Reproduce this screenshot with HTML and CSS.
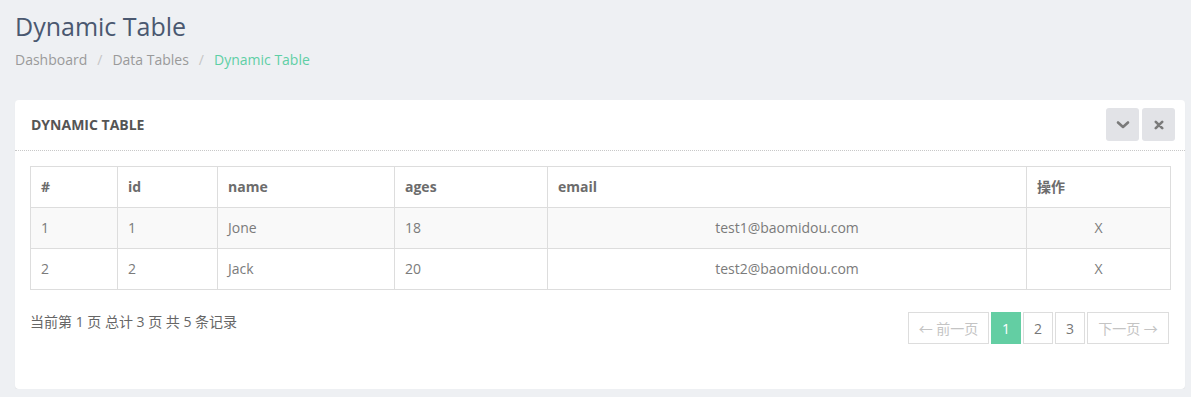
FILE: index.html
```html
<!DOCTYPE html>
<html>
<head>
<meta charset="utf-8">
<link rel="stylesheet" href="styles.css">
</head>
<body>
<div class="page">
  <h1 class="page-title">Dynamic Table</h1>
  <ol class="breadcrumb">
    <li class="crumb">Dashboard</li>
    <li class="sep">/</li>
    <li class="crumb">Data Tables</li>
    <li class="sep">/</li>
    <li class="crumb active">Dynamic Table</li>
  </ol>
  <section class="panel">
    <header class="panel-head">
      <h2 class="panel-title">DYNAMIC TABLE</h2>
      <div class="tools">
        <button class="tool" aria-label="collapse">
          <svg width="14" height="10" viewBox="0 0 14 10"><path d="M2 2.5 L7 7 L12 2.5" fill="none" stroke="#7a7a7a" stroke-width="2.6" stroke-linecap="round" stroke-linejoin="round"/></svg>
        </button>
        <button class="tool" aria-label="close">
          <svg width="10" height="10" viewBox="0 0 10 10"><path d="M1.8 1.8 L8.2 8.2 M8.2 1.8 L1.8 8.2" fill="none" stroke="#7a7a7a" stroke-width="2.6" stroke-linecap="round"/></svg>
        </button>
      </div>
    </header>
    <div class="panel-body">
      <table class="grid">
        <colgroup>
          <col class="c1"><col class="c2"><col class="c3"><col class="c4"><col class="c5"><col class="c6">
        </colgroup>
        <thead>
          <tr><th>#</th><th>id</th><th>name</th><th>ages</th><th>email</th><th>操作</th></tr>
        </thead>
        <tbody>
          <tr class="odd"><td>1</td><td>1</td><td>Jone</td><td>18</td><td class="center">test1@baomidou.com</td><td class="center">X</td></tr>
          <tr><td>2</td><td>2</td><td>Jack</td><td>20</td><td class="center">test2@baomidou.com</td><td class="center">X</td></tr>
        </tbody>
      </table>
      <div class="foot">
        <p class="info">当前第 1 页 总计 3 页 共 5 条记录</p>
        <ul class="pager">
          <li class="pg disabled wide">← 前一页</li>
          <li class="pg active">1</li>
          <li class="pg">2</li>
          <li class="pg">3</li>
          <li class="pg disabled wide">下一页 →</li>
        </ul>
      </div>
    </div>
  </section>
</div>
</body>
</html>
```

FILE: styles.css
```css
* { box-sizing: border-box; }
html, body { margin: 0; padding: 0; }
body {
  background: #eef0f3;
  font-family: "Open Sans", "Noto Sans CJK SC", sans-serif;
  font-size: 14px;
  color: #777;
}
.page { padding: 0 6px 0 15px; }
.page-title {
  margin: 0;
  padding-top: 10px;
  font-size: 25px;
  font-weight: 400;
  line-height: 32px;
  color: #4a5870;
}
.breadcrumb {
  list-style: none;
  margin: 0;
  padding: 8px 0 0;
  display: flex;
  line-height: 20px;
  font-size: 14px;
  color: #9a9a9a;
}
.breadcrumb .sep { padding: 0 10px; color: #c5c5c5; }
.breadcrumb .active { color: #5ecfa5; }
.panel {
  margin-top: 30px;
  width: 1170px;
  background: #fff;
  border-radius: 4px;
  box-shadow: 0 1px 1px rgba(0,0,0,0.06);
}
.panel-head {
  height: 51px;
  display: flex;
  align-items: flex-start;
  justify-content: space-between;
  padding: 8px 10px 0 16px;
  border-bottom: 1px dotted #c8c8c8;
}
.panel-title {
  margin: 0;
  padding-top: 7px;
  font-size: 14px;
  font-weight: 700;
  line-height: 20px;
  color: #555;
}
.tools { display: flex; gap: 3px; }
.tool {
  width: 33px;
  height: 33px;
  border: 0;
  padding: 0;
  border-radius: 3px;
  background: #e2e3e7;
  display: flex;
  align-items: center;
  justify-content: center;
}
.panel-body { padding: 15px 16px 45px 15px; }
.grid {
  width: 1140px;
  border-collapse: collapse;
  table-layout: fixed;
}
.c1 { width: 87px; } .c2 { width: 100px; } .c3 { width: 177px; }
.c4 { width: 153px; } .c5 { width: 479px; } .c6 { width: 144px; }
.grid th, .grid td {
  border: 1px solid #ddd;
  padding: 10px 10px;
  height: 41px;
  line-height: 20px;
  text-align: left;
  font-size: 14px;
}
.grid th { font-weight: 700; color: #6c6c6c; }
.grid td { color: #7b7b7b; }
.grid .center { text-align: center; }
.grid tr.odd td { background: #f9f9f9; }
.foot {
  margin-top: 22px;
  display: flex;
  justify-content: space-between;
  align-items: flex-start;
}
.info { margin: 0; line-height: 20px; color: #666; font-size: 14px; }
.pager {
  list-style: none;
  margin: 0;
  padding: 0;
  display: flex;
  gap: 2px;
}
.pg {
  height: 32px;
  width: 30px;
  border: 1px solid #ddd;
  display: flex;
  align-items: center;
  justify-content: center;
  color: #777;
  font-size: 14px;
}
.pg.wide { width: 81px; }
.pg.wide:last-child { width: 82px; }
.pg.disabled { color: #c4c4c4; }
.pg.active { background: #63cea3; border-color: #63cea3; color: #fff; }
```
